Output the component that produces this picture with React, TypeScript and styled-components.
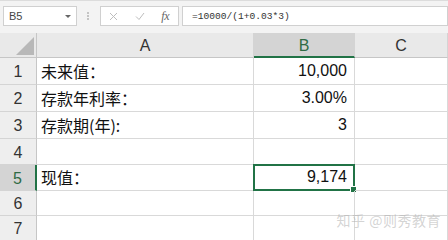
import React from "react";
import styled, { createGlobalStyle } from "styled-components";

const GlobalStyle = createGlobalStyle`
  html, body { margin: 0; padding: 0; background: #ffffff; overflow: hidden; }
  #root { width: 448px; height: 240px; overflow: hidden; }
`;

const Page = styled.div`
  width: 448px;
  height: 240px;
  display: flex;
  flex-direction: column;
  overflow: hidden;
  font-family: "Liberation Sans", "Noto Sans CJK SC", sans-serif;
`;

const Toolbar = styled.div`
  height: 33px;
  flex: 0 0 33px;
  box-sizing: border-box;
  background: #f3f3f3;
  border-top: 1px solid #dcdcdc;
  display: flex;
  align-items: center;
  padding: 0 0 2px 3px;
`;

const Box = styled.div<{ $w?: number; $ml?: number }>`
  height: 20px;
  box-sizing: border-box;
  background: #ffffff;
  border: 1px solid #d0d0d0;
  display: flex;
  align-items: center;
  ${(p) => (p.$w ? `width: ${p.$w}px; flex: 0 0 ${p.$w}px;` : "flex: 1 1 auto;")}
  margin-left: ${(p) => p.$ml ?? 0}px;
`;

const NameText = styled.span`
  font-family: "Liberation Sans", sans-serif;
  font-size: 11px;
  color: #444;
  padding-left: 5px;
  flex: 1;
`;

const Caret = styled.span`
  width: 0;
  height: 0;
  border-left: 3px solid transparent;
  border-right: 3px solid transparent;
  border-top: 3px solid #666;
  margin-right: 5px;
`;

const Dots = styled.div`
  width: 22px;
  flex: 0 0 22px;
  display: flex;
  flex-direction: column;
  align-items: center;
  gap: 1px;
  & > i {
    width: 2px;
    height: 2px;
    background: #c4c4c4;
    display: block;
  }
`;

const IconSlot = styled.span<{ $w: number }>`
  width: ${(p) => p.$w}px;
  display: flex;
  justify-content: center;
  align-items: center;
`;

const Fx = styled.span`
  font-family: "Liberation Serif", serif;
  font-style: italic;
  font-size: 12px;
  color: #666;
  letter-spacing: -0.5px;
`;

const FormulaText = styled.span`
  font-family: "Liberation Mono", monospace;
  font-size: 9.6px;
  color: #333;
  padding-left: 9px;
  white-space: pre;
`;

const Grid = styled.div`
  display: grid;
  grid-template-columns: 37px 217px 101px 1fr;
  grid-template-rows: 25px 27px 27px 27px 26px 26px 25px 25px;
`;

const Corner = styled.div`
  background: #e9e9e9;
  border-right: 1px solid #c6c6c6;
  border-bottom: 1px solid #c6c6c6;
  box-sizing: border-box;
  display: flex;
  align-items: flex-end;
  justify-content: flex-end;
  padding: 0 2px 2px 0;
`;

const Triangle = styled.div`
  width: 0;
  height: 0;
  border-left: 18px solid transparent;
  border-bottom: 18px solid #b8b8b8;
`;

const ColHead = styled.div<{ $sel?: boolean }>`
  box-sizing: border-box;
  background: ${(p) => (p.$sel ? "#d4d4d4" : "#e9e9e9")};
  border-right: 1px solid #d4d4d4;
  border-bottom: ${(p) => (p.$sel ? "2px solid #217346" : "1px solid #c6c6c6")};
  display: flex;
  align-items: center;
  justify-content: center;
  font-family: "Liberation Sans", sans-serif;
  font-size: 16px;
  color: ${(p) => (p.$sel ? "#2f6b45" : "#333")};
  padding-top: ${(p) => (p.$sel ? 3 : 2)}px;
`;

const RowHead = styled.div<{ $sel?: boolean }>`
  box-sizing: border-box;
  background: ${(p) => (p.$sel ? "#d4d4d4" : "#eeeeee")};
  border-right: ${(p) => (p.$sel ? "2px solid #217346" : "1px solid #c6c6c6")};
  border-bottom: 1px solid #d4d4d4;
  display: flex;
  align-items: center;
  justify-content: center;
  font-family: "Liberation Sans", sans-serif;
  font-size: 16px;
  color: ${(p) => (p.$sel ? "#2f6b45" : "#333")};
  padding-top: 2px;
`;

const Cell = styled.div<{ $right?: boolean }>`
  box-sizing: border-box;
  border-right: 1px solid #d9d9d9;
  border-bottom: 1px solid #d9d9d9;
  display: flex;
  align-items: flex-end;
  justify-content: ${(p) => (p.$right ? "flex-end" : "flex-start")};
  padding: 0 ${(p) => (p.$right ? 7 : 0)}px 3px ${(p) => (p.$right ? 0 : 4)}px;
  font-family: ${(p) =>
    p.$right ? `"Liberation Sans", sans-serif` : `"Noto Sans CJK SC", sans-serif`};
  font-size: 16px;
  line-height: 20px;
  color: #111;
  white-space: nowrap;
  position: relative;
`;

const SelCell = styled(Cell)`
  border: 2px solid #217346;
  margin: -1px 0 0 -1px;
  padding-right: 6px;
  padding-bottom: 2px;
`;

const FillHandle = styled.span`
  position: absolute;
  right: -4px;
  bottom: -4px;
  width: 5px;
  height: 5px;
  background: #217346;
  border: 1px solid #ffffff;
`;

const Watermark = styled.span`
  position: absolute;
  right: 6px;
  top: -6px;
  font-family: "Noto Sans CJK SC", sans-serif;
  font-size: 14px;
  line-height: 20px;
  color: rgba(175, 175, 175, 0.55);
  letter-spacing: 0.5px;
  white-space: nowrap;
`;

const rows: { a: string; b: string }[] = [
  { a: "未来值：", b: "10,000" },
  { a: "存款年利率：", b: "3.00%" },
  { a: "存款期(年):", b: "3" },
  { a: "", b: "" },
  { a: "现值：", b: "9,174" },
  { a: "", b: "" },
  { a: "", b: "" },
];

export default function App() {
  return (
    <>
      <GlobalStyle />
      <Page>
        <Toolbar>
          <Box $w={74}>
            <NameText>B5</NameText>
            <Caret />
          </Box>
          <Dots>
            <i />
            <i />
            <i />
          </Dots>
          <Box $w={79} $ml={1}>
            <IconSlot $w={26}>
              <svg width="9" height="9" viewBox="0 0 9 9">
                <path d="M1 1L8 8M8 1L1 8" stroke="#bdbdbd" strokeWidth="1" fill="none" />
              </svg>
            </IconSlot>
            <IconSlot $w={26}>
              <svg width="10" height="9" viewBox="0 0 10 9">
                <path d="M1 4.5L4 7.5L9 1" stroke="#bdbdbd" strokeWidth="1" fill="none" />
              </svg>
            </IconSlot>
            <IconSlot $w={26}>
              <Fx>fx</Fx>
            </IconSlot>
          </Box>
          <Box $ml={3}>
            <FormulaText>=10000/(1+0.03*3)</FormulaText>
          </Box>
        </Toolbar>
        <Grid>
          <Corner>
            <Triangle />
          </Corner>
          <ColHead>A</ColHead>
          <ColHead $sel>B</ColHead>
          <ColHead>C</ColHead>
          {rows.map((r, i) => {
            const n = i + 1;
            const sel = n === 5;
            return (
              <React.Fragment key={n}>
                <RowHead $sel={sel}>{n}</RowHead>
                <Cell>{r.a}</Cell>
                {sel ? (
                  <SelCell $right>
                    {r.b}
                    <FillHandle />
                  </SelCell>
                ) : (
                  <Cell $right>{r.b}</Cell>
                )}
                <Cell>{n === 7 ? <Watermark>知乎 @则秀教育</Watermark> : null}</Cell>
              </React.Fragment>
            );
          })}
        </Grid>
      </Page>
    </>
  );
}
